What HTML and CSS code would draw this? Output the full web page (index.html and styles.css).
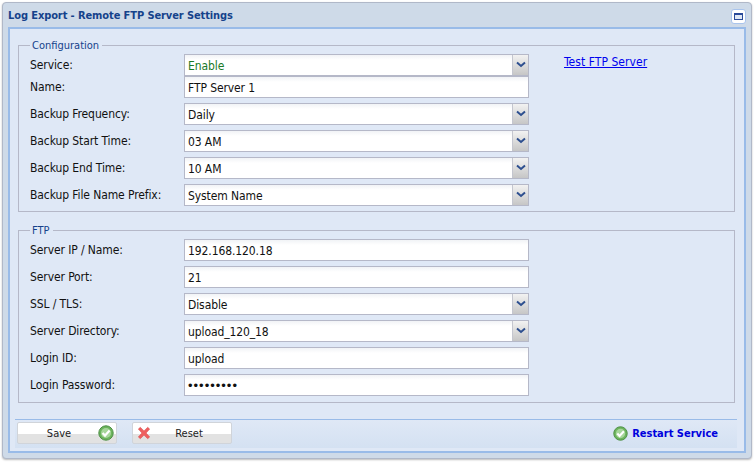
FILE: index.html
```html
<!DOCTYPE html>
<html lang="en">
<head>
<meta charset="utf-8">
<title>Log Export</title>
<link rel="stylesheet" href="styles.css">
</head>
<body>
<div class="window">
  <div class="titlebar">
    <span class="title">Log Export - Remote FTP Server Settings</span>
    <span class="winbtn"><svg width="15" height="15" viewBox="0 0 15 15"><rect x="0.5" y="0.5" width="14" height="14" rx="2.5" fill="#fff" stroke="#a9c4ec"/><rect x="3.5" y="4.5" width="8" height="6" fill="#dfe8f6" stroke="#2a4a9a"/><rect x="3" y="4" width="9" height="2" fill="#2a4a9a"/></svg></span>
  </div>
  <div class="panel">
    <div class="content">
      <fieldset class="group group-config">
        <legend>Configuration</legend>
        <div class="row row-service">
          <label>Service:</label>
          <div class="select"><span class="val green">Enable</span><span class="arrow"><svg width="12" height="8" viewBox="0 0 12 8"><path d="M2 1.5 L6 5 L10 1.5" fill="none" stroke="#2d4f8f" stroke-width="2"/></svg></span></div>
          <a class="test" href="#">Test FTP Server</a>
        </div>
        <div class="row">
          <label>Name:</label>
          <div class="input">FTP Server 1</div>
        </div>
        <div class="row">
          <label>Backup Frequency:</label>
          <div class="select"><span class="val">Daily</span><span class="arrow"><svg width="12" height="8" viewBox="0 0 12 8"><path d="M2 1.5 L6 5 L10 1.5" fill="none" stroke="#2d4f8f" stroke-width="2"/></svg></span></div>
        </div>
        <div class="row">
          <label>Backup Start Time:</label>
          <div class="select"><span class="val">03 AM</span><span class="arrow"><svg width="12" height="8" viewBox="0 0 12 8"><path d="M2 1.5 L6 5 L10 1.5" fill="none" stroke="#2d4f8f" stroke-width="2"/></svg></span></div>
        </div>
        <div class="row">
          <label>Backup End Time:</label>
          <div class="select"><span class="val">10 AM</span><span class="arrow"><svg width="12" height="8" viewBox="0 0 12 8"><path d="M2 1.5 L6 5 L10 1.5" fill="none" stroke="#2d4f8f" stroke-width="2"/></svg></span></div>
        </div>
        <div class="row">
          <label>Backup File Name Prefix:</label>
          <div class="select"><span class="val">System Name</span><span class="arrow"><svg width="12" height="8" viewBox="0 0 12 8"><path d="M2 1.5 L6 5 L10 1.5" fill="none" stroke="#2d4f8f" stroke-width="2"/></svg></span></div>
        </div>
      </fieldset>
      <fieldset class="group group-ftp">
        <legend>FTP</legend>
        <div class="row">
          <label>Server IP / Name:</label>
          <div class="input">192.168.120.18</div>
        </div>
        <div class="row">
          <label>Server Port:</label>
          <div class="input">21</div>
        </div>
        <div class="row">
          <label>SSL / TLS:</label>
          <div class="select"><span class="val">Disable</span><span class="arrow"><svg width="12" height="8" viewBox="0 0 12 8"><path d="M2 1.5 L6 5 L10 1.5" fill="none" stroke="#2d4f8f" stroke-width="2"/></svg></span></div>
        </div>
        <div class="row">
          <label>Server Directory:</label>
          <div class="select"><span class="val">upload_120_18</span><span class="arrow"><svg width="12" height="8" viewBox="0 0 12 8"><path d="M2 1.5 L6 5 L10 1.5" fill="none" stroke="#2d4f8f" stroke-width="2"/></svg></span></div>
        </div>
        <div class="row">
          <label>Login ID:</label>
          <div class="input">upload</div>
        </div>
        <div class="row">
          <label>Login Password:</label>
          <div class="input dots">•••••••••</div>
        </div>
      </fieldset>
    </div>
    <div class="toolbar">
      <button class="btn btn-save" type="button"><span class="btn-text">Save</span>
        <svg class="ic" width="16" height="16" viewBox="0 0 16 16"><circle cx="8" cy="8" r="7.2" fill="#6cb45c" stroke="#4d8f45"/><circle cx="8" cy="8" r="5" fill="#a6d69a"/><path d="M4.6 8 L7 10.6 L11.6 5.6" fill="none" stroke="#fff" stroke-width="2.2"/></svg>
      </button>
      <button class="btn btn-reset" type="button">
        <svg class="ic" width="14" height="14" viewBox="0 0 16 16"><path d="M1.5 3.5 L3.8 1.5 L8 5.6 L12.2 1.5 L14.5 3.5 L10.4 8 L14.5 12.5 L12.2 14.5 L8 10.4 L3.8 14.5 L1.5 12.5 L5.6 8 Z" fill="#ee5f5f" stroke="#d94a4a" stroke-width="0.6"/></svg>
        <span class="btn-text">Reset</span>
      </button>
      <a class="restart" href="#">
        <svg width="15" height="15" viewBox="0 0 16 16"><circle cx="8" cy="8" r="7.2" fill="#6cb45c" stroke="#4d8f45"/><circle cx="8" cy="8" r="5" fill="#a6d69a"/><path d="M4.6 8 L7 10.6 L11.6 5.6" fill="none" stroke="#fff" stroke-width="2.2"/></svg>
        <span>Restart Service</span>
      </a>
    </div>
  </div>
</div>
</body>
</html>
```
FILE: styles.css
```css
* { box-sizing: border-box; }
html, body { margin: 0; padding: 0; width: 754px; height: 464px; background: #fff; overflow: hidden; }
body { font-family: "DejaVu Sans", sans-serif; font-stretch: condensed; font-size: 12px; letter-spacing: -0.1px; color: #111; padding: 2px 2px 5px 2px; }
.window { height: 457px; border: 1px solid #b0b8c8; border-radius: 4px; background: #cedae8; padding: 0 5px 5px 5px; box-shadow: 0 1px 2px #bbb; display: flex; flex-direction: column; }
.titlebar { height: 24px; flex: none; display: flex; align-items: center; justify-content: space-between; }
.title { font-weight: bold; font-size: 11px; letter-spacing: -0.1px; color: #15428b; }
.winbtn { display: flex; margin-top: 2px; }
.panel { flex: 1; background: #dfe8f6; border: 2px solid #99bbe8; display: flex; flex-direction: column; min-height: 0; }
.content { flex: 1; padding: 9px 9px 0 8px; display: flex; flex-direction: column; gap: 11px; }
.group { margin: 0; border: 1px solid #b5b8c8; padding: 2px 0 0 11px; min-width: 0; }
.group legend { color: #15428b; padding: 2px 3px 0 2px; line-height: 12px; font-size: 11px; letter-spacing: 0; }
.group-config { height: 174px; }
.group-ftp { height: 180px; }
.row { display: flex; align-items: flex-start; height: 27px; }
.row-service { height: 22px; }
.row label { width: 154px; flex: none; line-height: 22px; color: #111; }
.input, .select { width: 345px; height: 22px; border: 1px solid #b5b8c8; background: linear-gradient(#f1f3f6, #fff 5px); display: flex; align-items: center; color: #111; line-height: 14px; padding-top: 1px; }
.input { padding-left: 3px; }
.select { justify-content: space-between; padding-top: 0; }
.val { padding: 1px 0 0 3px; }
.green { color: #1a7a28; }
.arrow { width: 16px; height: 100%; flex: none; display: flex; align-items: center; justify-content: center; background: linear-gradient(#f2f2f2, #c6c6c6); border-left: 1px solid #c4c6cf; }
.dots { font-family: "Liberation Sans", sans-serif; font-size: 13px; letter-spacing: 1px; }
.test { margin-left: 35px; color: #00e; line-height: 14px; margin-top: 1px; letter-spacing: 0.05px; }
.toolbar { height: 29px; flex: none; margin: 0 7px 3px 5px; border-top: 1px solid #99bbe8; background: linear-gradient(#dfe8f6, #d4e1f2); display: flex; align-items: center; padding: 0 0 2px 2px; gap: 15px; }
.btn { width: 100px; height: 22px; border: 1px solid #d0d4da; border-radius: 2px; background: linear-gradient(#fff 55%, #e2e2e2 55%); display: flex; align-items: center; justify-content: space-between; padding: 0 2px 0 5px; font: 11px "DejaVu Sans", sans-serif; font-stretch: condensed; color: #222; }
.btn-text { flex: 1; text-align: center; }
.btn-save .btn-text { padding-right: 3px; }
.btn-reset { padding-left: 4px; }
.btn-reset .btn-text { padding-right: 2px; }
.restart { margin-left: auto; margin-right: 19px; display: flex; align-items: center; gap: 4px; color: #00d; font-weight: bold; font-size: 11px; letter-spacing: 0; text-decoration: none; }
```
